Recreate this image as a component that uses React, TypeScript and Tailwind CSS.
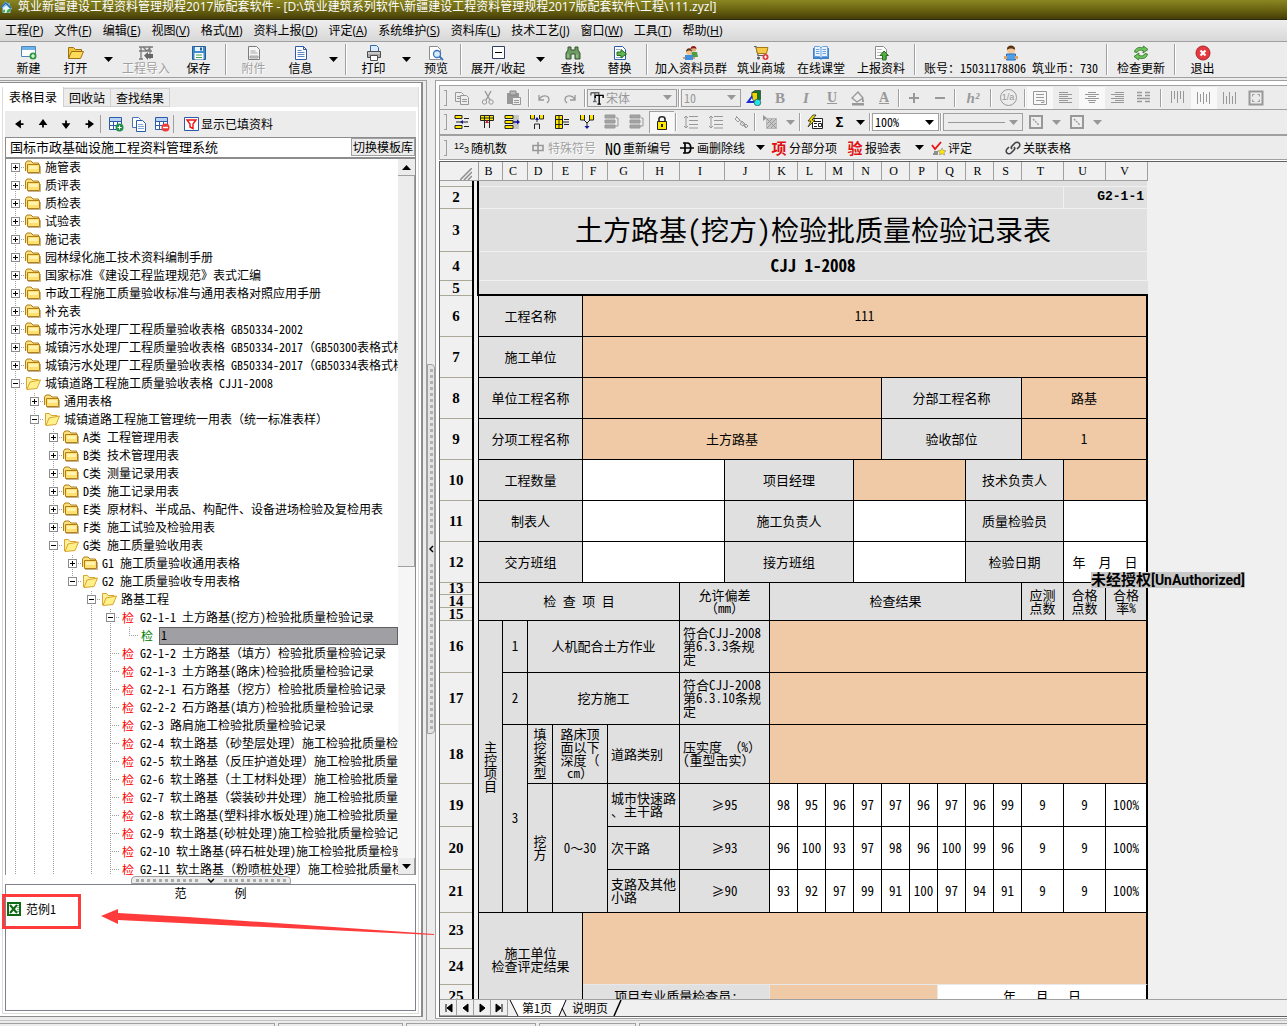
import React, { useState } from "react";
import { clsx } from "clsx";

/* ---------- icons ---------- */

const ICONS: Record<string, React.ReactNode> = {
  app: (
    <>
      <path d="M1 8 7 1l3 3 2-2v4l3 4-2 1v4H3V9z" fill="#7ec3ee" />
      <path d="M7 2 1 8l1 1 5-5 6 6 1-1z" fill="#1d5fa8" />
      <path d="M4 15V9l4-3 4 4v5z" fill="#eef6fb" />
      <path d="M8 15c0-3 2-5 5-5 0 4-2 5-5 5zM3 15c0-2 1-3 3-4 1 2 0 4-3 4z" fill="#3fa845" />
    </>
  ),
  new: (
    <>
      <path d="M.5 1.500h14v10H.5z" fill="#fff" stroke="#4d86b8" />
      <path d="M1 2h13v3H1z" fill="#6db3e8" />
      <circle cx="12" cy="11" r="3.500" fill="#2c9a3a" />
      <path d="M12 9v4M10 11h4" stroke="#fff" strokeWidth="1.200" />
    </>
  ),
  open: (
    <>
      <path d="M.5 13V2.500h5l2 2h6V7" fill="#f3c33c" stroke="#9a7414" />
      <path d="m.5 13.500 3-7h12l-3 7z" fill="#ffd95a" stroke="#9a7414" />
    </>
  ),
  importing: (
    <>
      <path d="M1 2h14M3 2v12M12 2v12M1 6h13M5 2l4 4 4-4M1 14h4" stroke="#7a7a7a" fill="none" strokeWidth="1.300" />
      <path d="m6 10.500 4-3.500v2h5v4h-5v2z" fill="#666" />
    </>
  ),
  save: (
    <>
      <path d="M1.500 1.500h13v13h-13z" fill="#3f8bd0" stroke="#275f97" />
      <path d="M4 2h8v4H4z" fill="#e8f3fb" />
      <path d="M3.500 8h9v6.500h-9z" fill="#fff" />
      <path d="M5 10h6M5 12.500h6" stroke="#47a048" />
      <path d="M9 2.500h2v3H9z" fill="#275f97" />
    </>
  ),
  attach: (
    <>
      <path d="M2.500 1.500h8l3 3v10h-11z" fill="#f6f6f6" stroke="#7c7c7c" />
      <path d="M4.500 6h5M4.500 8h7M4 11h8v2H4z" stroke="#a6a6a6" fill="#c4c4c4" />
    </>
  ),
  info: (
    <>
      <path d="M2.500 1.500h8l3 3v10h-11z" fill="#fff" stroke="#2a5aa8" />
      <path d="M10.500 1.500v3h3" fill="none" stroke="#2a5aa8" />
      <path d="M4.500 5.500h4M4.500 7.500h7M4.500 9.500h7M4.500 11.500h7" stroke="#5b86c9" />
    </>
  ),
  print: (
    <>
      <path d="M4.500 7V.500h6l2 2V7" fill="#dcecff" stroke="#3567a6" />
      <path d="M1.500 6.500h13v6h-13z" fill="#a9a9a9" stroke="#4d4d4d" />
      <path d="M2 8h12" stroke="#e8e8e8" />
      <path d="M4.500 10.500h7v5h-7z" fill="#fff" stroke="#4d4d4d" />
    </>
  ),
  preview: (
    <>
      <path d="M1.500 1.500h8l3 3v10h-11z" fill="#fff" stroke="#8b8b8b" />
      <circle cx="9" cy="9" r="3.500" fill="#d5ecff" stroke="#3b73b8" strokeWidth="1.300" />
      <path d="m11.500 11.500 3.500 3.500" stroke="#3b73b8" strokeWidth="1.800" />
    </>
  ),
  minus: (
    <>
      <path d="M2.500 1.500h12v12h-12z" fill="#fff" stroke="#2d3f66" />
      <path d="M5 7.500h7" stroke="#000" />
    </>
  ),
  find: (
    <>
      <path d="M3 2h3v3h4V2h3v3l2 3v6h-5V9H6v5H1V8l2-3z" fill="#6d9b62" stroke="#36572f" />
      <path d="M3 9v4M12 9v4" stroke="#a9cf9e" />
    </>
  ),
  replace: (
    <>
      <path d="M2.500 1.500h8l3 3v10h-11z" fill="#fff" stroke="#2a5aa8" />
      <path d="M4 4.500h4M4 12.500h7" stroke="#85a6da" />
      <path d="M5 7h4V4.500L14.500 9 9 13v-2.500H5z" fill="#5fb54f" stroke="#2b6c20" />
    </>
  ),
  people: (
    <>
      <circle cx="10.500" cy="4" r="2.800" fill="#e2b07c" />
      <path d="M7.500 4c0-4 6-4 6 0-1-1-4-1-6 0z" fill="#8b1a1a" />
      <path d="M8 7h6l1 5H9z" fill="#4f9d45" />
      <circle cx="6" cy="7" r="3" fill="#f0c08e" />
      <path d="M3 7c0-5 6-5 6 0-1-2-4-2-6 0z" fill="#5b3413" />
      <path d="M2 10h8v5H2z" fill="#3f8fe0" />
      <path d="M0 12h2v2H0zM10 12h2v2h-2z" fill="#e09a55" />
    </>
  ),
  cart: (
    <>
      <path d="M1 1.500h2l2 9h9" fill="none" stroke="#5c5c5c" strokeWidth="1.200" />
      <path d="M3 2.500h12l-1.500 6h-9z" fill="#f7c948" stroke="#a47a12" />
      <circle cx="5.500" cy="13" r="1.500" fill="#555" />
      <circle cx="12.500" cy="12" r="3" fill="#e0393e" />
      <path d="M12.500 10.500v3M11 12h3" stroke="#fff" />
    </>
  ),
  book: (
    <>
      <path d="M0 3h16v11H9l-1 1-1-1H0z" fill="#3d80cc" />
      <path d="M1.500 1.500h5L8 3l1.500-1.500h5v10h-5L8 13l-1.500-1.500h-5z" fill="#eaf4ff" stroke="#6ea2dc" />
      <path d="M8 3v10M3 4.500h3.500M3 6.500h3.500M3 8.500h3.500M9.500 4.500H13M9.500 6.500H13M9.500 8.500H13" stroke="#6ea2dc" />
    </>
  ),
  upload: (
    <>
      <path d="M2.500 1.500h8l3 3v9h-11z" fill="#fff" stroke="#8b8b8b" />
      <path d="M4 4.500h5M4 7.500h7M4 10.500h5" stroke="#bdbdbd" />
      <path d="m11 6 4.500 4.500H13V15H9.500v-4.500H7z" fill="#57ad43" stroke="#2b6c20" />
    </>
  ),
  user: (
    <>
      <circle cx="8" cy="5" r="4" fill="#f3c99c" />
      <path d="M4 5c-1-6 9-6 8 0-2-2-6-2-8 0z" fill="#5b3413" />
      <path d="M3.500 9h9v6h-9z" fill="#4ba0ee" stroke="#2a6fb6" />
      <path d="M1 11h3v3H1zM12 11h3v3h-3z" fill="#e7a35c" />
    </>
  ),
  refresh: (
    <>
      <path d="M1.500 7C2 3 6 1.500 10 3l.5-2L15 4.500 10 8l.3-2.200C7.500 4.500 5 5 4 7.500z" fill="#6cc45a" stroke="#2c6f22" strokeWidth=".8" />
      <path d="M14.500 9c-.5 4-4.500 5.500-8.500 4l-.5 2L1 11.500 6 8l-.3 2.200C8.500 11.500 11 11 12 8.500z" fill="#6cc45a" stroke="#2c6f22" strokeWidth=".8" />
    </>
  ),
  exit: (
    <>
      <circle cx="8" cy="8" r="7" fill="#e8383f" stroke="#a7262b" />
      <path d="m5.500 5.500 5 5M10.500 5.500l-5 5" stroke="#fff" strokeWidth="2.200" />
    </>
  ),
  left: <path d="M4 8h8M4 8l4-3v6z" fill="#000" stroke="#000" strokeWidth="2" />,
  right: <path d="M12 8H4M12 8 8 5v6z" fill="#000" stroke="#000" strokeWidth="2" />,
  up: <path d="M8 4v8M8 4 5 8h6z" fill="#000" stroke="#000" strokeWidth="2" />,
  down: <path d="M8 12V4M8 12 5 8h6z" fill="#000" stroke="#000" strokeWidth="2" />,
  gridAdd: (
    <>
      <path d="M1.500 1.500h12v12h-12zM1 5.500h13M1 9.500h13M5.500 5v9M9.500 5v9" fill="#fff" stroke="#2a5aa8" />
      <path d="M2 2h11v3H2z" fill="#b9d1f2" />
      <circle cx="11.500" cy="11.500" r="4" fill="#23904a" />
      <path d="M11.500 9.500v4M9.500 11.500h4" stroke="#fff" />
    </>
  ),
  gridDel: (
    <>
      <path d="M1.500 1.500h12v12h-12zM1 5.500h13M1 9.500h13M5.500 5v9M9.500 5v9" fill="#fff" stroke="#2a5aa8" />
      <path d="M2 2h11v3H2z" fill="#b9d1f2" />
      <circle cx="11.500" cy="11.500" r="4" fill="#ea3a35" />
      <path d="M9 11.500h5" stroke="#fff" strokeWidth="1.500" />
    </>
  ),
  copyBlue: (
    <>
      <path d="M1.500 1.500h6l2 2v8h-8z" fill="#fff" stroke="#4674bb" />
      <path d="M5.500 4.500h6l3 3v8h-9z" fill="#fff" stroke="#2a5aa8" />
      <path d="M7 8.500h5M7 10.500h6M7 12.500h6" stroke="#85a6da" />
    </>
  ),
  filter: (
    <>
      <path d="M.5 1.500h14v13H.5z" fill="#fff" stroke="#2a5aa8" />
      <path d="M3 4h9L9 8v4.500L6 11V8z" fill="none" stroke="#e11" strokeWidth="1.400" />
    </>
  ),
  copy: (
    <>
      <path d="M1.500 2.500h6l2 2v7h-8z" fill="#eee" stroke="#989898" />
      <path d="M6.500 5.500h6l2 2v7h-8z" fill="#eee" stroke="#989898" />
      <path d="M3 6.500h3M3 8.500h3M8 9.500h5M8 11.500h5" stroke="#989898" />
    </>
  ),
  cut: (
    <>
      <path d="m5 1 5 9M11 1 6 10" stroke="#989898" strokeWidth="1.400" />
      <circle cx="4.500" cy="12" r="2.200" fill="none" stroke="#989898" />
      <circle cx="11" cy="12" r="2.200" fill="none" stroke="#989898" />
    </>
  ),
  paste: (
    <>
      <path d="M1 3h12v11H1z" fill="#989898" />
      <path d="M4 1h6v4H4z" fill="#b8b8b8" stroke="#888" />
      <path d="M6.500 7.500h8v7h-8z" fill="#eee" stroke="#989898" />
      <path d="M8 10.500h5M8 12.500h5" stroke="#989898" />
    </>
  ),
  undo: <path d="M3 5v5h5M3 10c3-6 10-5 10 0 0 1-1 2-2 3" fill="none" stroke="#989898" strokeWidth="1.300" />,
  redo: <path d="M13 5v5H8M13 10C10 4 3 5 3 10c0 1 1 2 2 3" fill="none" stroke="#989898" strokeWidth="1.300" />,
  tt: (
    <>
      <path d="M1 2h9v3M1 2v3M5.500 2v10M3.500 12h4" stroke="#666" strokeWidth="1.600" fill="none" />
      <path d="M6 5h9v3M6 5v3M10.500 5v10M8.500 15h4" stroke="#000" strokeWidth="1.600" fill="none" />
    </>
  ),
  colors: (
    <>
      <path d="M6 2.500 9 .5h5.500v9L12 12H6z" fill="#0b7d2c" stroke="#222" strokeWidth=".6" />
      <path d="M6 2.500h5.500V11H6z" fill="#e8d800" stroke="#222" strokeWidth=".6" />
      <path d="M0 13 6 5l2 8z" fill="#1a2ad8" />
      <path d="m4 11 2-3 1 3z" fill="#fff" />
      <circle cx="11.500" cy="12.500" r="3.300" fill="#22e3e8" stroke="#333" strokeWidth=".6" />
    </>
  ),
  bucket: (
    <>
      <path d="m2 8 6-6 5 6-6 4z" fill="#eee" stroke="#989898" strokeWidth="1.400" />
      <path d="M12 8c2 1 2 3 2 4h-2zM2 13h12v2.500H2z" fill="#989898" />
    </>
  ),
  plus: <path d="M8 3v10M3 8h10" stroke="#989898" strokeWidth="2" />,
  dash: <path d="M3 8h10" stroke="#989898" strokeWidth="2" />,
  wrap: (
    <>
      <path d="M1.500 1.500h13v13h-13z" fill="none" stroke="#989898" />
      <path d="M4 4.500h8M4 7.500h8M4 10.500h8v2H9" fill="none" stroke="#989898" />
    </>
  ),
  alignLeft: <path d="M1 2.500h9M1 4.500h13M1 6.500h9M1 8.500h13M1 10.500h9M1 12.500h13" stroke="#989898" />,
  alignCenter: <path d="M4 2.500h8M1 4.500h14M4 6.500h8M1 8.500h14M4 10.500h8M5 12.500h6" stroke="#989898" />,
  alignRight: <path d="M5 2.500h9M1 4.500h13M5 6.500h9M1 8.500h13M5 10.500h9M1 12.500h13" stroke="#989898" />,
  justify: <path d="M1 2.500h5M9 2.500h5M1 5.500h5M9 5.500h5M1 8.500h13M1 11.500h5M9 11.500h5" stroke="#989898" strokeWidth="1.300" />,
  vTop: <path d="M1.500 1v12M4.500 1v8M7.500 1v12M10.500 1v8M13.500 1v12" stroke="#989898" />,
  vMid: <path d="M1.500 2v12M4.500 4v8M7.500 2v12M10.500 4v8M13.500 2v12" stroke="#989898" />,
  vBottom: <path d="M1.500 2v12M4.500 6v8M7.500 2v12M10.500 6v8M13.500 2v12" stroke="#989898" />,
  expand: (
    <>
      <path d="M1.500 1.500h13v13h-13z" fill="none" stroke="#989898" strokeWidth="2" />
      <path d="M4.500 6.500v-2h2M9.500 4.500h2v2M11.500 9.500v2h-2M6.500 11.500h-2v-2" fill="none" stroke="#989898" />
    </>
  ),
  insRow: (
    <>
      <path d="M1 1.500h7v3H1zM1 11.500h7v3H1z" fill="#ffe800" stroke="#222" />
      <path d="M2 8h12M10 4.500h5M10 12.500h5" stroke="#222" />
      <path d="m6 8 3-2v4z" fill="#12129a" />
    </>
  ),
  insCol: (
    <>
      <path d="M1.500 1.500h13v5h-13z" fill="#ffe800" stroke="#222" />
      <path d="M5.500 1v13M10.500 1v13M1 4h14" stroke="#222" />
      <path d="m8 6 2 3H6z" fill="#c22" />
    </>
  ),
  shiftRight: (
    <>
      <path d="M9 1h6v14H9z" fill="#c6c6c6" />
      <path d="M1 1.500h8v3H1zM1 6.500h8v3H1zM1 11.500h8v3H1z" fill="#ffe800" stroke="#222" />
      <path d="M9 8h4" stroke="#12129a" strokeWidth="1.500" />
      <path d="m16 8-3-2.500v5z" fill="#12129a" />
    </>
  ),
  splitUp: (
    <>
      <path d="M1.500 1v4h4V1M10.500 1v4h4V1" fill="#ffe800" stroke="#222" />
      <path d="M8 4v4M5.500 15v-5h5v5" stroke="#222" fill="none" />
      <path d="m8 3 2 3H6z" fill="#12129a" />
    </>
  ),
  tableLeft: (
    <>
      <path d="M1.500 1.500h7v13h-7zM1 5.500h8M1 10.500h8M5 2v12" fill="#ffe800" stroke="#222" />
      <path d="M10 5.500h5M8 8h7M10 10.500h5" stroke="#222" />
    </>
  ),
  merge: (
    <>
      <path d="M1.500 1v5h4V1M10.500 1v5h4V1" fill="#ffe800" stroke="#222" />
      <path d="M5 6l3 3 3-3M8 9v4" stroke="#222" fill="none" />
      <path d="m8 15 2.500-3h-5z" fill="#12129a" />
    </>
  ),
  stack: (
    <>
      <path d="M1 1h10v3H1zM1 6h10v3H1zM1 11h10v3H1z" fill="#a4a4a4" stroke="#989898" />
      <path d="M12 4h2v8h-3" fill="none" stroke="#989898" />
    </>
  ),
  lock: (
    <>
      <path d="M5 7V4c0-3 6-3 6 0v3" fill="none" stroke="#222" strokeWidth="1.600" />
      <path d="M3.500 6.500h9v8h-9z" fill="#ffe800" stroke="#222" />
      <path d="M8 9v3" stroke="#222" strokeWidth="2" />
    </>
  ),
  spacing: <path d="M6 2.500h9M6 6.500h9M6 10.500h9M6 14h9M3 2v12M1 4l2-2 2 2M1 12l2 2 2-2" fill="none" stroke="#989898" />,
  chain: <path d="m3 2 10 11M2 5l2-2 3 3-2 2zM7 10l2-3 3 3-2 2zM11 12l2-2 2 2-2 2z" fill="none" stroke="#989898" />,
  hatch: (
    <>
      <path d="M1 1l4 3-4 3z" fill="#989898" />
      <path d="M4.500 4.500h10v10h-10z" fill="#c8c8c8" stroke="#989898" strokeDasharray="1 1" />
      <path d="m5 14 9-9M5 10l5-5M9 14l5-5M5 5l9 9" stroke="#989898" />
    </>
  ),
  formula: (
    <>
      <path d="M5.500 4.500h10v10h-10z" fill="#fff" stroke="#222" />
      <path d="M7 7.500h7M7 9.500h3M7 12.500h3M11.500 9.500h3v3h-3z" fill="none" stroke="#222" />
      <path d="M6 1 1 7h3l-3 6 7-7H5l4-5z" fill="#ffe800" stroke="#222" strokeWidth=".8" />
    </>
  ),
  cellBox: (
    <>
      <path d="M2 2h12v12H2z" fill="#eee" stroke="#989898" strokeWidth="2" />
      <path d="m5 5 6 6" stroke="#989898" strokeDasharray="2 1" strokeWidth="1.400" />
    </>
  ),
  special: <path d="M8 2v12M3 5.500h10v5H3z" fill="none" stroke="#989898" strokeWidth="1.600" />,
  strike: <path d="M4 3h4c5 0 5 10 0 10H4M6 3v10M1 8h14" fill="none" stroke="#000" strokeWidth="1.700" />,
  rate: (
    <>
      <path d="m2 5 3 4 6-7" fill="none" stroke="#e11" strokeWidth="1.800" />
      <path d="M4 12h4M3 14h5" stroke="#333" />
      <path d="m12 8 1.200 2.500 2.800.3-2 1.700.6 2.500-2.600-1.300L9.400 15l.6-2.500-2-1.700 2.800-.3z" fill="#ffe800" stroke="#777" strokeWidth=".5" />
    </>
  ),
  link: (
    <path
      d="M7 9c-1-1-1-2 0-3l3-3c1-1 3-1 4 0s1 3 0 4l-2 2M9 7c1 1 1 2 0 3l-3 3c-1 1-3 1-4 0s-1-3 0-4l2-2"
      fill="none"
      stroke="#444"
      strokeWidth="1.700"
    />
  ),
  excel: (
    <>
      <path d="M1 1h14v14H1z" fill="#0b6a12" />
      <path d="M3 3h10v10H3z" fill="#fff" />
      <path d="m4 4 7 8M11 4l-7 8" stroke="#0b6a12" strokeWidth="2" />
      <path d="M12 4v8" stroke="#0b6a12" strokeDasharray="1 1" />
    </>
  ),
  folder: (
    <>
      <path d="M.5 12V4l1.500-2h4l2 2h5.500v2" fill="#fbe07c" stroke="#b07f1c" />
      <path d="M2.500 5.500h12v8h-12z" fill="#ffe070" stroke="#b07f1c" />
      <path d="M4 7h9v3H4z" fill="#fff3b0" />
      <path d="M3 14.500h12.500V7" stroke="#8a6a2a" strokeOpacity=".5" fill="none" />
    </>
  ),
  folderOpen: (
    <>
      <path d="M1.500 14V2.500h4l1.500 2h6V7" fill="#fdf0a0" stroke="#d8a62c" />
      <path d="M2 14.500 5 7l10.500-2L12 13.500z" fill="#fff08a" stroke="#d8a62c" />
    </>
  ),
};

const Icon = ({ name, className = "w-4 h-4" }: { name: string; className?: string }) => (
  <svg viewBox="0 0 16 16" className={clsx("shrink-0", className)} aria-hidden="true">
    {ICONS[name]}
  </svg>
);

const Caret = ({ dim }: { dim?: boolean }) => (
  <svg viewBox="0 0 9 5" className="w-[9px] h-[5px] shrink-0" aria-hidden="true">
    <path d="M0 0h9L4.500 5z" fill={dim ? "#989898" : "#000"} />
  </svg>
);

/* ---------- menu and main toolbar ---------- */

const MENUS = [
  ["工程", "P"], ["文件", "F"], ["编辑", "E"], ["视图", "V"], ["格式", "M"], ["资料上报", "D"], ["评定", "A"],
  ["系统维护", "S"], ["资料库", "L"], ["技术工艺", "J"], ["窗口", "W"], ["工具", "T"], ["帮助", "H"],
];

const Tool = ({ icon, label, w = "w-[47px]", off }: { icon: string; label: string; w?: string; off?: boolean }) => (
  <button className={clsx("flex flex-col items-center shrink-0 pt-[3px]", w, off && "text-[#a0a0a0] [text-shadow:1px_1px_0_#fff]")}>
    <Icon name={icon} />
    <span className="leading-[14px] whitespace-pre">{label}</span>
  </button>
);

const Drop = () => (
  <button aria-label="更多" className="w-[18px] h-[35px] flex items-center justify-center shrink-0">
    <Caret />
  </button>
);

const Bar = () => (
  <div className="w-2 shrink-0 flex justify-center py-[2px]">
    <div className="w-[2px] h-[31px] border-l border-[#a0a0a0] bg-white" />
  </div>
);

const MainToolbar = () => (
  <div className="h-[37px] shrink-0 flex pl-[5px] border-y border-[#a0a0a0] bg-[#ececec]">
    <Tool icon="new" label="新建" />
    <Tool icon="open" label="打开" />
    <Drop />
    <Tool icon="importing" label="工程导入" w="w-[58px]" off />
    <Tool icon="save" label="保存" />
    <Bar />
    <Tool icon="attach" label="附件" off />
    <Tool icon="info" label="信息" />
    <Drop />
    <Bar />
    <Tool icon="print" label="打印" />
    <Drop />
    <Tool icon="preview" label="预览" w="w-[42px]" />
    <Bar />
    <Tool icon="minus" label="展开/收起" w="w-[66px]" />
    <Drop />
    <Tool icon="find" label="查找" />
    <Tool icon="replace" label="替换" />
    <Bar />
    <Tool icon="people" label="加入资料员群" w="w-[80px]" />
    <Tool icon="cart" label="筑业商城" w="w-[60px]" />
    <Tool icon="book" label="在线课堂" w="w-[60px]" />
    <Tool icon="upload" label="上报资料" w="w-[60px]" />
    <Bar />
    <Tool icon="user" label="账号：15031178806 筑业币：730" w="w-[184px]" />
    <Bar />
    <Tool icon="refresh" label="检查更新" w="w-[60px]" />
    <Bar />
    <Tool icon="exit" label="退出" />
  </div>
);

/* ---------- left pane: tree ---------- */

type Node = { level: number; kind: "closed" | "open" | "form" | "done"; text: string; leaf?: boolean };

const NODES: Node[] = [
  ...["施管表", "质评表", "质检表", "试验表", "施记表", "园林绿化施工技术资料编制手册",
    "国家标准《建设工程监理规范》表式汇编", "市政工程施工质量验收标准与通用表格对照应用手册", "补充表",
    "城市污水处理厂工程质量验收表格 GB50334-2002",
    "城镇污水处理厂工程质量验收表格 GB50334-2017（GB50300表格式样）",
    "城镇污水处理厂工程质量验收表格 GB50334-2017（GB50334表格式样）",
  ].map((text): Node => ({ level: 0, kind: "closed", text })),
  { level: 0, kind: "open", text: "城镇道路工程施工质量验收表格 CJJ1-2008" },
  { level: 1, kind: "closed", text: "通用表格" },
  { level: 1, kind: "open", text: "城镇道路工程施工管理统一用表（统一标准表样）" },
  { level: 2, kind: "closed", text: "A类 工程管理用表" },
  { level: 2, kind: "closed", text: "B类 技术管理用表" },
  { level: 2, kind: "closed", text: "C类 测量记录用表" },
  { level: 2, kind: "closed", text: "D类 施工记录用表" },
  { level: 2, kind: "closed", text: "E类 原材料、半成品、构配件、设备进场检验及复检用表" },
  { level: 2, kind: "closed", text: "F类 施工试验及检验用表" },
  { level: 2, kind: "open", text: "G类 施工质量验收用表" },
  { level: 3, kind: "closed", text: "G1 施工质量验收通用表格" },
  { level: 3, kind: "open", text: "G2 施工质量验收专用表格" },
  { level: 4, kind: "open", text: "路基工程" },
  { level: 5, kind: "form", text: "G2-1-1 土方路基(挖方)检验批质量检验记录" },
  { level: 6, kind: "done", text: "1", leaf: true },
  ...["G2-1-2 土方路基（填方）检验批质量检验记录", "G2-1-3 土方路基(路床)检验批质量检验记录",
    "G2-2-1 石方路基（挖方）检验批质量检验记录", "G2-2-2 石方路基(填方)检验批质量检验记录",
    "G2-3 路肩施工检验批质量检验记录", "G2-4 软土路基（砂垫层处理）施工检验批质量检验记录",
    "G2-5 软土路基（反压护道处理）施工检验批质量检验记录", "G2-6 软土路基（土工材料处理）施工检验批质量检验记录",
    "G2-7 软土路基（袋装砂井处理）施工检验批质量检验记录", "G2-8 软土路基(塑料排水板处理)施工检验批质量检验记录",
    "G2-9 软土路基(砂桩处理)施工检验批质量检验记录", "G2-10 软土路基(碎石桩处理)施工检验批质量检验记录",
    "G2-11 软土路基（粉喷桩处理）施工检验批质量检验记录",
  ].map((text): Node => ({ level: 5, kind: "form", text, leaf: true })),
];

// levels that still have siblings below the last visible row
const OPEN_LEVELS = [0, 1, 2, 4, 5];

const continues = (i: number, level: number) => {
  const next = NODES.slice(i + 1).find((n) => n.level <= level);
  return next ? next.level === level : OPEN_LEVELS.includes(level);
};

const Guide = ({ top, bottom, across, sign }: { top?: boolean; bottom?: boolean; across?: boolean; sign?: string }) => (
  <svg viewBox="0 0 19 18" className="w-[19px] h-[18px] shrink-0" shapeRendering="crispEdges" aria-hidden="true">
    <g stroke="#a0a0a0" strokeDasharray="1 1">
      {top && <path d="M9.500 0v8" />}
      {bottom && <path d="M9.500 8v10" />}
      {across && <path d="M9 8.500h10" />}
    </g>
    {sign && (
      <>
        <path d="M5.500 4.500h8v8h-8z" fill="#fff" stroke="#8c8c8c" />
        <path d={sign === "+" ? "M7 8.500h5M9.500 6v5" : "M7 8.500h5"} stroke="#000" />
      </>
    )}
  </svg>
);

const TreeRow = ({ node, index }: { node: Node; index: number }) => {
  const own = (
    <Guide
      top={index > 0}
      bottom={continues(index, node.level)}
      across
      sign={node.leaf ? undefined : node.kind === "closed" ? "+" : "-"}
    />
  );
  return (
    <li className="flex h-[18px] items-start whitespace-pre">
      {Array.from({ length: node.level }, (_, k) => (
        <Guide key={k} top={continues(index, k)} bottom={continues(index, k)} />
      ))}
      {node.leaf ? own : <button aria-label="展开或收起" className="shrink-0">{own}</button>}
      {node.kind === "closed" && <Icon name="folder" />}
      {node.kind === "open" && <Icon name="folderOpen" />}
      {node.kind === "form" && <span className="w-4 shrink-0 leading-[18px] text-center text-[#f00]">检</span>}
      {node.kind === "done" && <span className="w-4 shrink-0 leading-[18px] text-center text-[#008000]">检</span>}
      {node.kind === "done" ? (
        <span className="ml-1 pl-px flex-1 h-[18px] leading-[14px] border border-[#606060] bg-[#a09fa4]">{node.text}</span>
      ) : (
        <span className="ml-1">{node.text}</span>
      )}
    </li>
  );
};

const TABS = ["表格目录", "回收站", "查找结果"];

const LeftPane = () => {
  const [tab, setTab] = useState(0);
  return (
    <div className="w-[427px] shrink-0 mt-[2px] border-t border-r border-[#a0a0a0] flex flex-col">
      <div className="flex-1 min-h-0 mt-px mr-[3px] mb-[3px] border-t border-r-2 border-b border-[#8c8c8c] bg-white flex flex-col pt-1 px-[2px] pb-[2px]">
        <div className="flex-1 min-h-0 bg-[#ececec] border-l border-r border-b border-[#dcdcdc] flex flex-col">
          <div className="h-[20px] shrink-0 flex items-end bg-[#ececec]">
            {TABS.map((t, i) => (
              <button
                key={t}
                onClick={() => setTab(i)}
                className={clsx(
                  "border-r border-[#d0d0d0]",
                  i === tab ? "h-5 bg-white px-[6px]" : "h-[19px] border-t border-b px-[5px]",
                )}
              >
                {t}
              </button>
            ))}
          </div>
          <div className="flex-1 min-h-0 bg-white p-[2px] pt-1 flex flex-col">
            <div className="h-[26px] shrink-0 bg-[#ececec] flex items-center">
              {["left", "up", "down", "right"].map((n) => (
                <button key={n} aria-label={n} className="w-[23px] flex justify-center first:ml-[3px]">
                  <Icon name={n} className="w-[14px] h-[14px]" />
                </button>
              ))}
              <div className="w-px h-[18px] bg-[#a0a0a0] mr-[3px]" />
              {["gridAdd", "copyBlue", "gridDel"].map((n) => (
                <button key={n} aria-label={n} className="w-[23px] flex justify-center">
                  <Icon name={n} />
                </button>
              ))}
              <div className="w-px h-[18px] bg-[#a0a0a0]" />
              <button className="ml-[10px] flex items-center gap-px">
                <Icon name="filter" />
                显示已填资料
              </button>
            </div>
            <div className="h-[21px] shrink-0 flex border border-[#8c8c8c]">
              <input
                aria-label="模板库"
                readOnly
                defaultValue="国标市政基础设施工程资料管理系统"
                className="flex-1 min-w-0 px-1 pb-[2px] text-[13px] bg-white outline-none"
              />
              <button className="mb-px w-[64px] whitespace-nowrap bg-[#ececec] border border-[#a0a0a0] text-[12px] leading-4">
                切换模板库
              </button>
            </div>
            <div className="flex-1 min-h-0 flex border border-b-0 border-[#8c8c8c]">
              <ul className="flex-1 min-w-0 overflow-hidden">
                {NODES.map((n, i) => (
                  <TreeRow key={i} node={n} index={i} />
                ))}
              </ul>
              <div className="w-[17px] shrink-0 flex flex-col bg-[#f6f6f6]">
                <button aria-label="向上" className="h-[17px] flex items-center justify-center bg-[#ececec] border-b border-[#a0a0a0]">
                  <span className="rotate-180"><Caret /></span>
                </button>
                <div className="h-[391px] shrink-0 bg-[#ececec] border-r border-b border-[#a0a0a0]" />
                <div className="flex-1" />
                <button aria-label="向下" className="h-[17px] flex items-center justify-center bg-[#ececec] border-r border-b border-[#a0a0a0]">
                  <Caret />
                </button>
              </div>
            </div>
            <div className="h-[9px] shrink-0 flex justify-center items-end">
              <div className="w-[160px] h-2 bg-[#ececec] border border-[#a0a0a0] rounded-t flex items-center justify-between px-1">
                <div className="w-[62px] border-t-[3px] border-dotted border-[#a8a8a8]" />
                <svg viewBox="0 0 8 5" className="w-2 h-[5px]"><path d="m1 1 3 3 3-3" fill="none" stroke="#000" strokeWidth="1.500" /></svg>
                <div className="w-[62px] border-t-[3px] border-dotted border-[#a8a8a8]" />
              </div>
            </div>
            <div className="relative h-[127px] shrink-0 border border-[#7d828c] bg-white">
              <div className="h-4 flex justify-center gap-12">
                <span>范</span>
                <span>例</span>
              </div>
              <button className="flex items-center gap-1 h-4">
                <Icon name="excel" />
                <span>范例1</span>
              </button>
              {/* callout around the sample file */}
              <div className="absolute -left-1 top-[9px] w-[79px] h-[35px] border-[3px] border-[#ff3b3b]" />
              <svg viewBox="0 0 334 30" className="absolute left-[95px] top-[20px] w-[334px] h-[30px] z-10 pointer-events-none">
                <path d="M0 11 17 4v4l70 4 246 17v1L120 20 17 15v4z" fill="#ff3b3b" />
              </svg>
            </div>
          </div>
        </div>
      </div>
    </div>
  );
};

/* ---------- right pane: format bars ---------- */

const Ib = ({ icon, w = "w-[26px]", on, children }: { icon?: string; w?: string; on?: boolean; children?: React.ReactNode }) => (
  <button
    aria-label={icon}
    className={clsx("h-[22px] shrink-0 flex items-center justify-center text-[#989898]", w, on && "bg-[#f8f8f8]")}
  >
    {icon ? <Icon name={icon} /> : children}
  </button>
);

const Sep = ({ w = "w-1" }: { w?: string }) => (
  <div className={clsx("shrink-0 flex justify-center", w)}>
    <div className="w-[2px] h-[18px] border-l border-[#a0a0a0] bg-white" />
  </div>
);

const Grip = () => <div className="w-[3px] h-4 shrink-0 ml-1 mr-[2px] border-r border-y border-[#a0a0a0]" />;

const Pick = ({ w, value, label, icon, live }: { w: string; value: string; label: string; icon?: string; live?: boolean }) => (
  <div className={clsx("h-[18px] shrink-0 flex items-center border border-[#a0a0a0] pr-1 pl-[2px]", w, live ? "bg-white" : "text-[#989898]")}>
    {icon && <Icon name={icon} className="w-[14px] h-[14px] mr-[2px]" />}
    <select aria-label={label} defaultValue={value} className="flex-1 min-w-0 appearance-none outline-none leading-4">
      <option>{value}</option>
    </select>
    <Caret dim={!live} />
  </div>
);

const Word = ({ icon, mark, label, w, off }: { icon?: string; mark?: React.ReactNode; label: string; w: string; off?: boolean }) => (
  <button className={clsx("h-[22px] shrink-0 flex items-center gap-[2px] whitespace-pre", w, off && "text-[#a0a0a0] [text-shadow:1px_1px_0_#fff]")}>
    {icon ? <Icon name={icon} /> : mark}
    {label}
  </button>
);

const FormatBars = () => (
  <div className="shrink-0 border-t border-l border-[#a0a0a0] bg-[#ececec]">
    <div className="h-[24px] flex items-center overflow-hidden border-b border-[#a0a0a0]">
      <Grip />
      <Ib icon="copy" /><Ib icon="cut" /><Ib icon="paste" />
      <Sep />
      <Ib icon="undo" /><Ib icon="redo" />
      <Sep />
      <Pick w="w-[90px]" value="宋体" label="字体" icon="tt" />
      <Sep />
      <Pick w="w-[60px]" value="10" label="字号" />
      <Ib icon="colors" />
      <Ib><b className="font-['Liberation_Serif',serif] text-[15px]">B</b></Ib>
      <Ib><b className="font-['Liberation_Serif',serif] text-[15px] italic">I</b></Ib>
      <Ib><b className="font-['Liberation_Serif',serif] text-[14px] underline">U</b></Ib>
      <Ib icon="bucket" />
      <Ib><b className="font-['Liberation_Serif',serif] text-[14px] underline">A</b></Ib>
      <Sep />
      <Ib icon="plus" /><Ib icon="dash" />
      <Sep />
      <Ib w="w-8"><b className="font-['Liberation_Serif',serif] text-[15px] italic">h²</b></Ib>
      <Sep />
      <Ib w="w-[30px]">
        <span className="w-[17px] h-[17px] rounded-full border border-[#989898] text-[9px] leading-[15px] text-center font-['Liberation_Sans',sans-serif]">1/a</span>
      </Ib>
      <Sep />
      <Ib icon="wrap" on /><Ib icon="alignLeft" /><Ib icon="alignCenter" on /><Ib icon="alignRight" /><Ib icon="justify" />
      <Sep w="w-2" />
      <Ib icon="vTop" /><Ib icon="vMid" on /><Ib icon="vBottom" /><Ib icon="expand" />
    </div>
    <div className="h-[26px] flex items-center overflow-hidden border-b-2 border-[#a0a0a0]">
      <Grip />
      {["insRow", "insCol", "shiftRight", "splitUp", "tableLeft", "merge", "stack", "stack"].map((n, i) => (
        <Ib key={i} icon={n} w="w-[25px]" />
      ))}
      <button aria-label="lock" className="w-[25px] h-[22px] shrink-0 flex items-center justify-center bg-[#f8f8f8] border-t border-l border-[#a0a0a0]">
        <Icon name="lock" />
      </button>
      <Sep />
      <Ib icon="spacing" w="w-[25px]" /><Ib icon="spacing" w="w-[25px]" /><Ib icon="chain" w="w-[25px]" />
      <Sep />
      <Ib icon="hatch" w="w-[25px]" />
      <Ib w="w-4"><Caret dim /></Ib>
      <Sep />
      <Ib icon="formula" w="w-[25px]" />
      <Ib w="w-[25px]"><b className="text-black text-[13px]">Σ</b></Ib>
      <Ib w="w-4"><Caret /></Ib>
      <Sep />
      <Pick w="w-[67px]" value="100%" label="缩放" live />
      <Sep />
      <div className="w-[80px] h-[18px] shrink-0 flex items-center gap-1 border border-[#a0a0a0] px-1">
        <div className="flex-1 h-px bg-[#989898]" />
        <Caret dim />
      </div>
      <Ib icon="cellBox" w="w-[25px]" />
      <Ib w="w-4"><Caret dim /></Ib>
      <Ib icon="cellBox" w="w-[25px]" />
      <Ib w="w-4"><Caret dim /></Ib>
    </div>
    <div className="h-[24px] flex items-center overflow-hidden border-b border-[#a0a0a0]">
      <Grip />
      <Word
        mark={
          <span className="w-5 flex justify-end text-[9px] leading-3 font-['Liberation_Sans',sans-serif]">
            <span className="pb-1">1</span>
            <span>2</span>
            <span className="pt-1">3</span>
          </span>
        }
        label="随机数"
        w="w-[81px]"
      />
      <Word icon="special" label="特殊符号" w="w-[75px]" off />
      <Word mark={<span className="w-4 text-[16px]">NO</span>} label="重新编号" w="w-[74px]" />
      <Word icon="strike" label="画删除线" w="w-[70px]" />
      <Ib w="w-[22px]"><Caret /></Ib>
      <Word mark={<b className="w-4 text-[15px] text-[#e01010]">项</b>} label="分部分项" w="w-[76px]" />
      <Word mark={<b className="w-4 text-[15px] text-[#e01010]">验</b>} label="报验表" w="w-[61px]" />
      <Ib w="w-[22px]"><Caret /></Ib>
      <Word icon="rate" label="评定" w="w-[75px]" />
      <Word icon="link" label="关联表格" w="w-[70px]" />
    </div>
  </div>
);

/* ---------- right pane: sheet ---------- */

const COLS: [string, number][] = [
  ["B", 24], ["C", 25], ["D", 25], ["E", 30], ["F", 25], ["G", 36], ["H", 36], ["I", 45], ["J", 45], ["K", 28], ["L", 28],
  ["M", 28], ["N", 28], ["O", 28], ["P", 28], ["Q", 28], ["R", 28], ["S", 28], ["T", 42], ["U", 42], ["V", 42],
];

type Cell = { t?: string; c?: number; r?: number; bg?: "g" | "o" | "w"; cls?: string; soft?: boolean };

const g = (t: string, c = 1, r = 1, cls = ""): Cell => ({ t, c, r, bg: "g", cls });
const o = (t: string, c = 1, r = 1): Cell => ({ t, c, r, bg: "o" });
const w = (t: string, c = 1): Cell => ({ t, c, bg: "w" });
const head = (t: string, c = 21, cls = ""): Cell => ({ t, c, bg: "g", cls, soft: true });
const values = (list: string) => list.split(" ").map((v) => w(v));

const ROWS: { n: string; h: number; cells: Cell[] }[] = [
  { n: "", h: 6, cells: [head("")] },
  { n: "2", h: 22, cells: [head("", 19), head("G2-1-1", 2, "text-right pr-[3px] font-bold font-['Liberation_Mono',monospace]")] },
  { n: "3", h: 43, cells: [head("土方路基(挖方)检验批质量检验记录表", 21, "text-[28px] leading-8")] },
  { n: "4", h: 29, cells: [head("CJJ 1-2008", 21, "text-[17px] leading-6 font-bold")] },
  { n: "5", h: 15, cells: [{ t: "", c: 21, bg: "g", cls: "border-b-2 border-r-0" }] },
  { n: "6", h: 41, cells: [g("工程名称", 4), o("111", 17)] },
  { n: "7", h: 41, cells: [g("施工单位", 4), o("", 17)] },
  { n: "8", h: 41, cells: [g("单位工程名称", 4), o("", 9), g("分部工程名称", 5), o("路基", 3)] },
  { n: "9", h: 41, cells: [g("分项工程名称", 4), o("土方路基", 9), g("验收部位", 5), o("1", 3)] },
  { n: "10", h: 41, cells: [g("工程数量", 4), w("", 4), g("项目经理", 4), o("", 4), g("技术负责人", 3), o("", 2)] },
  { n: "11", h: 41, cells: [g("制表人", 4), w("", 4), g("施工负责人", 4), w("", 4), g("质量检验员", 3), w("", 2)] },
  { n: "12", h: 41, cells: [g("交方班组", 4), w("", 4), g("接方班组", 4), w("", 4), g("检验日期", 3), w("年  月  日", 2)] },
  {
    n: "13", h: 12,
    cells: [g("检 查 项 目", 7, 3), g("允许偏差\n（mm）", 2, 3), g("检查结果", 9, 3), g("应测\n点数", 1, 3), g("合格\n点数", 1, 3), g("合格\n率%", 1, 3)],
  },
  { n: "14", h: 13, cells: [] },
  { n: "15", h: 13, cells: [] },
  { n: "16", h: 52, cells: [g("主\n控\n项\n目", 1, 6), g("1"), g("人机配合土方作业", 5), g("符合CJJ-2008\n第6.3.3条规\n定", 2, 1, "text-left pl-[3px]"), o("", 12)] },
  { n: "17", h: 52, cells: [g("2"), g("挖方施工", 5), g("符合CJJ-2008\n第6.3.10条规\n定", 2, 1, "text-left pl-[3px]"), o("", 12)] },
  {
    n: "18", h: 59,
    cells: [g("3", 1, 4), g("填\n挖\n类\n型"), g("路床顶\n面以下\n深度（\ncm）", 2), g("道路类别", 2, 1, "text-left pl-[3px]"), g("压实度 （%）\n(重型击实）", 2, 1, "text-left pl-[3px]"), o("", 12)],
  },
  { n: "19", h: 43, cells: [g("挖\n方", 1, 3), g("0～30", 2, 3), g("城市快速路\n、主干路", 2, 1, "text-left pl-[3px]"), g("≥95", 2), ...values("98 95 96 97 97 96 97 96 99 9 9 100%")] },
  { n: "20", h: 43, cells: [g("次干路", 2, 1, "text-left pl-[3px]"), g("≥93", 2), ...values("96 100 93 97 98 96 100 99 96 9 9 100%")] },
  { n: "21", h: 43, cells: [g("支路及其他\n小路", 2, 1, "text-left pl-[3px]"), g("≥90", 2), ...values("93 92 97 99 91 100 97 94 91 9 9 100%")] },
  { n: "23", h: 36, cells: [g("施工单位\n检查评定结果", 4, 3), { ...o("", 17, 2), cls: "border-b-[#e8e8e8]" }] },
  { n: "24", h: 36, cells: [] },
  { n: "25", h: 23, cells: [g("项目专业质量检查员:", 5, 1, "border-r-[#e8e8e8]"), { ...o("", 6), cls: "border-r-[#e8e8e8]" }, w("年   月   日", 6)] },
];

const BG = { g: "bg-[#e0e0e0]", o: "bg-[#f0caa6]", w: "bg-white" };

const Sheet = () => (
  <div className="relative flex-1 min-h-0 overflow-hidden bg-[#f0f0f0]">
    <table className="table-fixed w-[708px] border-separate border-spacing-0 text-[13px] leading-[13px]">
      <colgroup>
        <col style={{ width: 32 }} />
        <col style={{ width: 7 }} />
        {COLS.map(([name, width]) => <col key={name} style={{ width }} />)}
      </colgroup>
      <thead>
        <tr className="h-[19px] text-[12px] font-['Liberation_Serif',serif]">
          <th colSpan={2} aria-label="全选" className="p-0 border-r border-b border-[#a0a0a0] align-bottom">
            <svg viewBox="0 0 12 12" className="w-3 h-3 ml-auto mr-[6px]">
              <path d="M0 12 12 0M4 12l8-8M8 12l4-4" stroke="#8c8c8c" strokeWidth="1.500" />
            </svg>
          </th>
          {COLS.map(([name]) => (
            <th key={name} scope="col" className="p-0 pr-1 font-normal border-r border-b border-[#a0a0a0]">{name}</th>
          ))}
        </tr>
      </thead>
      <tbody>
        {ROWS.map((row, i) => (
          <tr key={i} style={{ height: row.h }}>
            <th scope="row" className="p-0 border-b border-[#aca899] font-['Liberation_Serif',serif] text-[15px] leading-[11px]">{row.n}</th>
            <td className={clsx("p-0 border-l-2 border-black", i < 5 ? "border-r-2" : "border-r")} />
            {row.cells.map((cell, k) => (
              <td
                key={k}
                colSpan={cell.c}
                rowSpan={cell.r}
                className={clsx(
                  "p-0 pb-[2px] text-center border-r border-b whitespace-pre",
                  BG[cell.bg ?? "g"],
                  cell.soft ? "border-[#f0f0f0]" : "border-black",
                  i > 4 && k === row.cells.length - 1 && "border-r-2",
                  cell.cls,
                )}
              >
                {cell.t}
              </td>
            ))}
          </tr>
        ))}
      </tbody>
    </table>
    <div className="absolute left-[651px] top-[410px] h-4 leading-4 bg-[#c8c8c8] font-bold text-[14px] whitespace-nowrap [font-family:Roboto,'Noto_Sans_CJK_SC',sans-serif]">
      <span className="text-[15px]">未经授权</span>[UnAuthorized]
    </div>
  </div>
);

const NAV = ["M3 1v8M9 1v8L4 5z", "M8 1v8L3 5z", "M3 1v8l5-4z", "M8 1v8M2 1v8l5-4z"];

const SheetTabs = () => (
  <div className="h-[17px] shrink-0 flex border-t border-[#a0a0a0] bg-[#f0f0f0]">
    {NAV.map((d) => (
      <button key={d} aria-label="翻页" className="w-[17px] flex items-center justify-center border-r border-b border-[#a0a0a0]">
        <svg viewBox="0 0 11 10" className="w-[11px] h-[10px]"><path d={d} stroke="#000" /></svg>
      </button>
    ))}
    <svg viewBox="0 0 14 16" className="w-[14px] h-4"><path d="M2 0h12v16H10z" fill="#fff" /><path d="m2 0 8 16" stroke="#000" /></svg>
    <button className="bg-white leading-[14px]">第1页</button>
    <svg viewBox="0 0 20 16" className="w-5 h-4"><path d="M0 0h14L7 16H0z" fill="#fff" /><path d="M14 0 7 16M10 8l4 8" stroke="#000" /></svg>
    <button className="leading-[14px]">说明页</button>
    <svg viewBox="0 0 14 16" className="w-[14px] h-4"><path d="M13 0 6 16" stroke="#000" strokeWidth="1.500" /></svg>
  </div>
);

const App = () => (
  <div className="h-screen flex flex-col overflow-hidden bg-[#ececec] text-black text-[12px] leading-4 [font-family:'Noto_Sans_Mono_CJK_SC','Noto_Sans_CJK_SC',sans-serif]">
    <header className="h-5 shrink-0 flex items-start gap-[5px] overflow-hidden text-white bg-linear-to-b from-[#8a8620] via-[#6b6512] to-[#453e08] border-b border-[#2d2a14] [font-family:'Open_Sans','Noto_Sans_CJK_SC',sans-serif]">
      <Icon name="app" className="w-[13px] h-[14px]" />
      <h1 className="leading-[13px] text-[12px] whitespace-pre">
        {"筑业新疆建设工程资料管理规程2017版配套软件 - [D:\\筑业建筑系列软件\\新疆建设工程资料管理规程2017版配套软件\\工程\\111.zyzl]"}
      </h1>
    </header>
    <nav className="h-[21px] shrink-0 flex items-center gap-[11px] pl-[5px] bg-linear-to-b from-[#eeeeee] to-[#d8d8d8] [font-family:'Open_Sans','Noto_Sans_CJK_SC',sans-serif]">
      {MENUS.map(([label, key]) => (
        <button key={key} className="whitespace-nowrap">
          {label}(<span className="underline">{key}</span>)
        </button>
      ))}
    </nav>
    <MainToolbar />
    <main className="flex-1 min-h-0 flex">
      <LeftPane />
      <div className="w-2 shrink-0 flex flex-col justify-center">
        <div className="h-[370px] bg-[#e4e4e4] border border-[#a0a0a0] rounded-r flex flex-col items-center justify-between py-1">
          <div className="h-[165px] border-l-[3px] border-dotted border-[#b0b0b0]" />
          <svg viewBox="0 0 5 8" className="w-[5px] h-2"><path d="M4 1 1 4l3 3" fill="none" stroke="#000" strokeWidth="1.500" /></svg>
          <div className="h-[165px] border-l-[3px] border-dotted border-[#b0b0b0]" />
        </div>
      </div>
      <div className="flex-1 min-w-0 mt-[2px] mb-px pt-1 pl-[3px] flex flex-col bg-white border-t border-l border-b border-[#a0a0a0]">
        <FormatBars />
        <div className="flex-1 min-h-0 mt-px mb-px flex flex-col border-t border-l border-b border-[#606060]">
          <Sheet />
          <SheetTabs />
        </div>
      </div>
    </main>
    <footer className="h-[6px] shrink-0 flex gap-[3px] pt-[2px] border-t border-[#c4c4c4]">
      <div className="w-[275px] border-t border-r border-[#a0a0a0]" />
      <div className="w-[125px] border-t border-x border-[#a0a0a0]" />
      <div className="w-[130px] border-t border-x border-[#a0a0a0]" />
      <div className="w-[97px] border-t border-x border-[#a0a0a0]" />
      <div className="flex-1 border-t border-l border-[#a0a0a0]" />
    </footer>
  </div>
);

export default App;
